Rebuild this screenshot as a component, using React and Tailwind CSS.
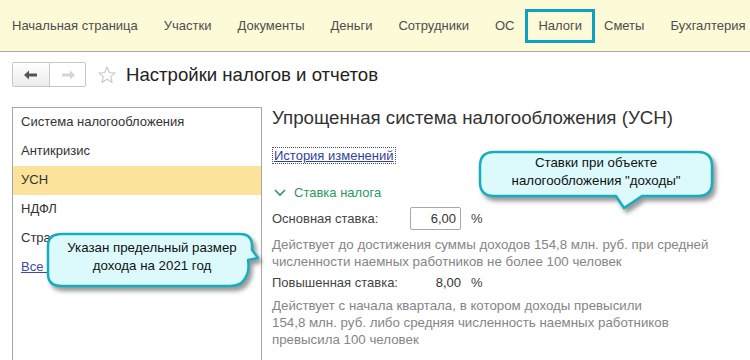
import React from 'react'

const menu = ['Начальная страница','Участки','Документы','Деньги','Сотрудники','ОС','Налоги','Сметы','Бухгалтерия']
const sections = ['Система налогообложения','Антикризис','УСН','НДФЛ','Страховые взносы']

function Callout({className, path, w, h, lines, textClass}){
  return (
    <div className={'absolute ' + className} style={{width:w, height:h}}>
      <svg width={w} height={h} className="absolute inset-0 drop-shadow-[3px_4px_2px_rgba(0,0,0,0.4)]">
        <path d={path} fill="#dcfafc" stroke="#16aebf" strokeWidth="2.5" strokeLinejoin="round"/>
      </svg>
      <div className={'absolute text-center text-[13.3px] leading-[18px] text-[#111] ' + textClass}>
        {lines.map(l=> <div key={l}>{l}</div>)}
      </div>
    </div>
  )
}

export default function App(){
  return (
    <div className="relative w-[750px] h-[360px] overflow-hidden bg-white font-['Liberation_Sans',Arial,sans-serif] text-[13px] text-[#4d4d4d]">
      <div className="h-[52px] bg-[#fcfad7] border-b border-[#a8a8a0] flex items-center pl-[12px]">
        {menu.map(m=>(
          <div key={m} className={m==='Налоги'
            ? 'h-[34px] px-[10px] mr-[9px] -ml-[15px] flex items-center border-[3px] border-[#0ba3c1]'
            : 'mr-[26px] whitespace-nowrap'}>{m}</div>
        ))}
      </div>

      <div className="flex items-center h-[44px] pl-[12px] pt-[1px]">
        <div className="flex h-[25px] border border-[#c6c6c6] rounded-[2px]">
          <div className="w-[37px] flex items-center justify-center bg-gradient-to-b from-white to-[#ececec] border-r border-[#c6c6c6]">
            <svg width="14" height="10" viewBox="0 0 14 10"><path d="M0 5 L5 0.5 L5 3.5 L13 3.5 L13 6.5 L5 6.5 L5 9.5 Z" fill="#555"/></svg>
          </div>
          <div className="w-[35px] flex items-center justify-center bg-white">
            <svg width="14" height="10" viewBox="0 0 14 10"><path d="M14 5 L9 0.5 L9 3.5 L1 3.5 L1 6.5 L9 6.5 L9 9.5 Z" fill="#d4d4d4"/></svg>
          </div>
        </div>
        <svg width="20" height="20" viewBox="0 0 24 24" className="ml-[11px]">
          <path d="M12 2.5 L14.8 9 L21.8 9.5 L16.4 14 L18.1 21 L12 17.2 L5.9 21 L7.6 14 L2.2 9.5 L9.2 9 Z" fill="none" stroke="#c8c8c8" strokeWidth="1.3" strokeLinejoin="round"/>
        </svg>
        <div className="ml-[9px] text-[18.6px] text-[#222]">Настройки налогов и отчетов</div>
      </div>

      <div className="flex mt-[11px] pl-[12px]">
        <div className="w-[250px] h-[260px] border border-[#a6a6a6] border-b-0 shrink-0">
          {sections.map(s=>(
            <div key={s} className={'h-[29px] flex items-center pl-[8px] pb-[2px] text-[#333] ' + (s==='УСН' ? 'bg-[#fce39c]' : '')}>{s}</div>
          ))}
          <div className="h-[29px] flex items-center pl-[8px] pb-[2px]">
            <span className="text-[#3b4aa8] underline">Все налоги и отчеты</span>
          </div>
        </div>

        <div className="ml-[10px] flex-1">
          <div className="text-[18.7px] text-[#333] leading-[22px]">Упрощенная система налогообложения (УСН)</div>
          <div className="mt-[17px] h-[18px]">
            <span className="inline-block border border-dotted border-[#555] px-[1px] leading-[15px] text-[#2f3f9e] underline">История изменений</span>
          </div>
          <div className="mt-[19px] flex items-center text-[#2c9a5b]">
            <svg width="12" height="8" viewBox="0 0 12 8" className="mr-[8px] ml-[2px]"><path d="M1 1 L6 6 L11 1" fill="none" stroke="#2c9a5b" strokeWidth="1.6"/></svg>
            Ставка налога
          </div>
          <div className="mt-[5px] flex items-center h-[22px]">
            <div className="w-[138px] text-[#444]">Основная ставка:</div>
            <div className="w-[51px] h-[23px] border border-[#a8a8a8] rounded-[2px] flex items-center justify-end pr-[4px] text-[#333]">6,00</div>
            <div className="ml-[10px] text-[#444]">%</div>
          </div>
          <div className="mt-[6px] text-[13.3px] text-[#858585] leading-[17px]">
            Действует до достижения суммы доходов 154,8 млн. руб. при средней<br/>численности наемных работников не более 100 человек
          </div>
          <div className="mt-[4px] flex items-center h-[18px]">
            <div className="w-[161px] text-[#444]">Повышенная ставка:</div>
            <div className="w-[28px] text-right text-[#333]">8,00</div>
            <div className="ml-[10px] text-[#444]">%</div>
          </div>
          <div className="mt-[5px] text-[13.3px] text-[#858585] leading-[17px]">
            Действует с начала квартала, в котором доходы превысили<br/>154,8 млн. руб. либо средняя численность наемных работников<br/>превысила 100 человек
          </div>
        </div>
      </div>

      <Callout className="left-[44px] top-[230px]" w={222} h={66}
        path="M18 4 L196 4 Q208 4 208 16 L208 20 L214 28 L204 30 Q206 42 200 50 Q196 56 186 56 L18 56 Q4 56 4 44 L4 16 Q4 4 18 4 Z"
        lines={['Указан предельный размер','дохода на 2021 год']} textClass="left-[6px] w-[204px] top-[9px]"/>
      <Callout className="left-[476px] top-[148px]" w={244} h={66}
        path="M18 4 L222 4 Q236 4 236 18 L236 34 Q236 48 222 48 L166 48 L148 60 L140 48 L18 48 Q4 48 4 34 L4 18 Q4 4 18 4 Z"
        lines={['Ставки при объекте','налогообложения "доходы"']} textClass="left-[4px] w-[232px] top-[6px]"/>
    </div>
  )
}
